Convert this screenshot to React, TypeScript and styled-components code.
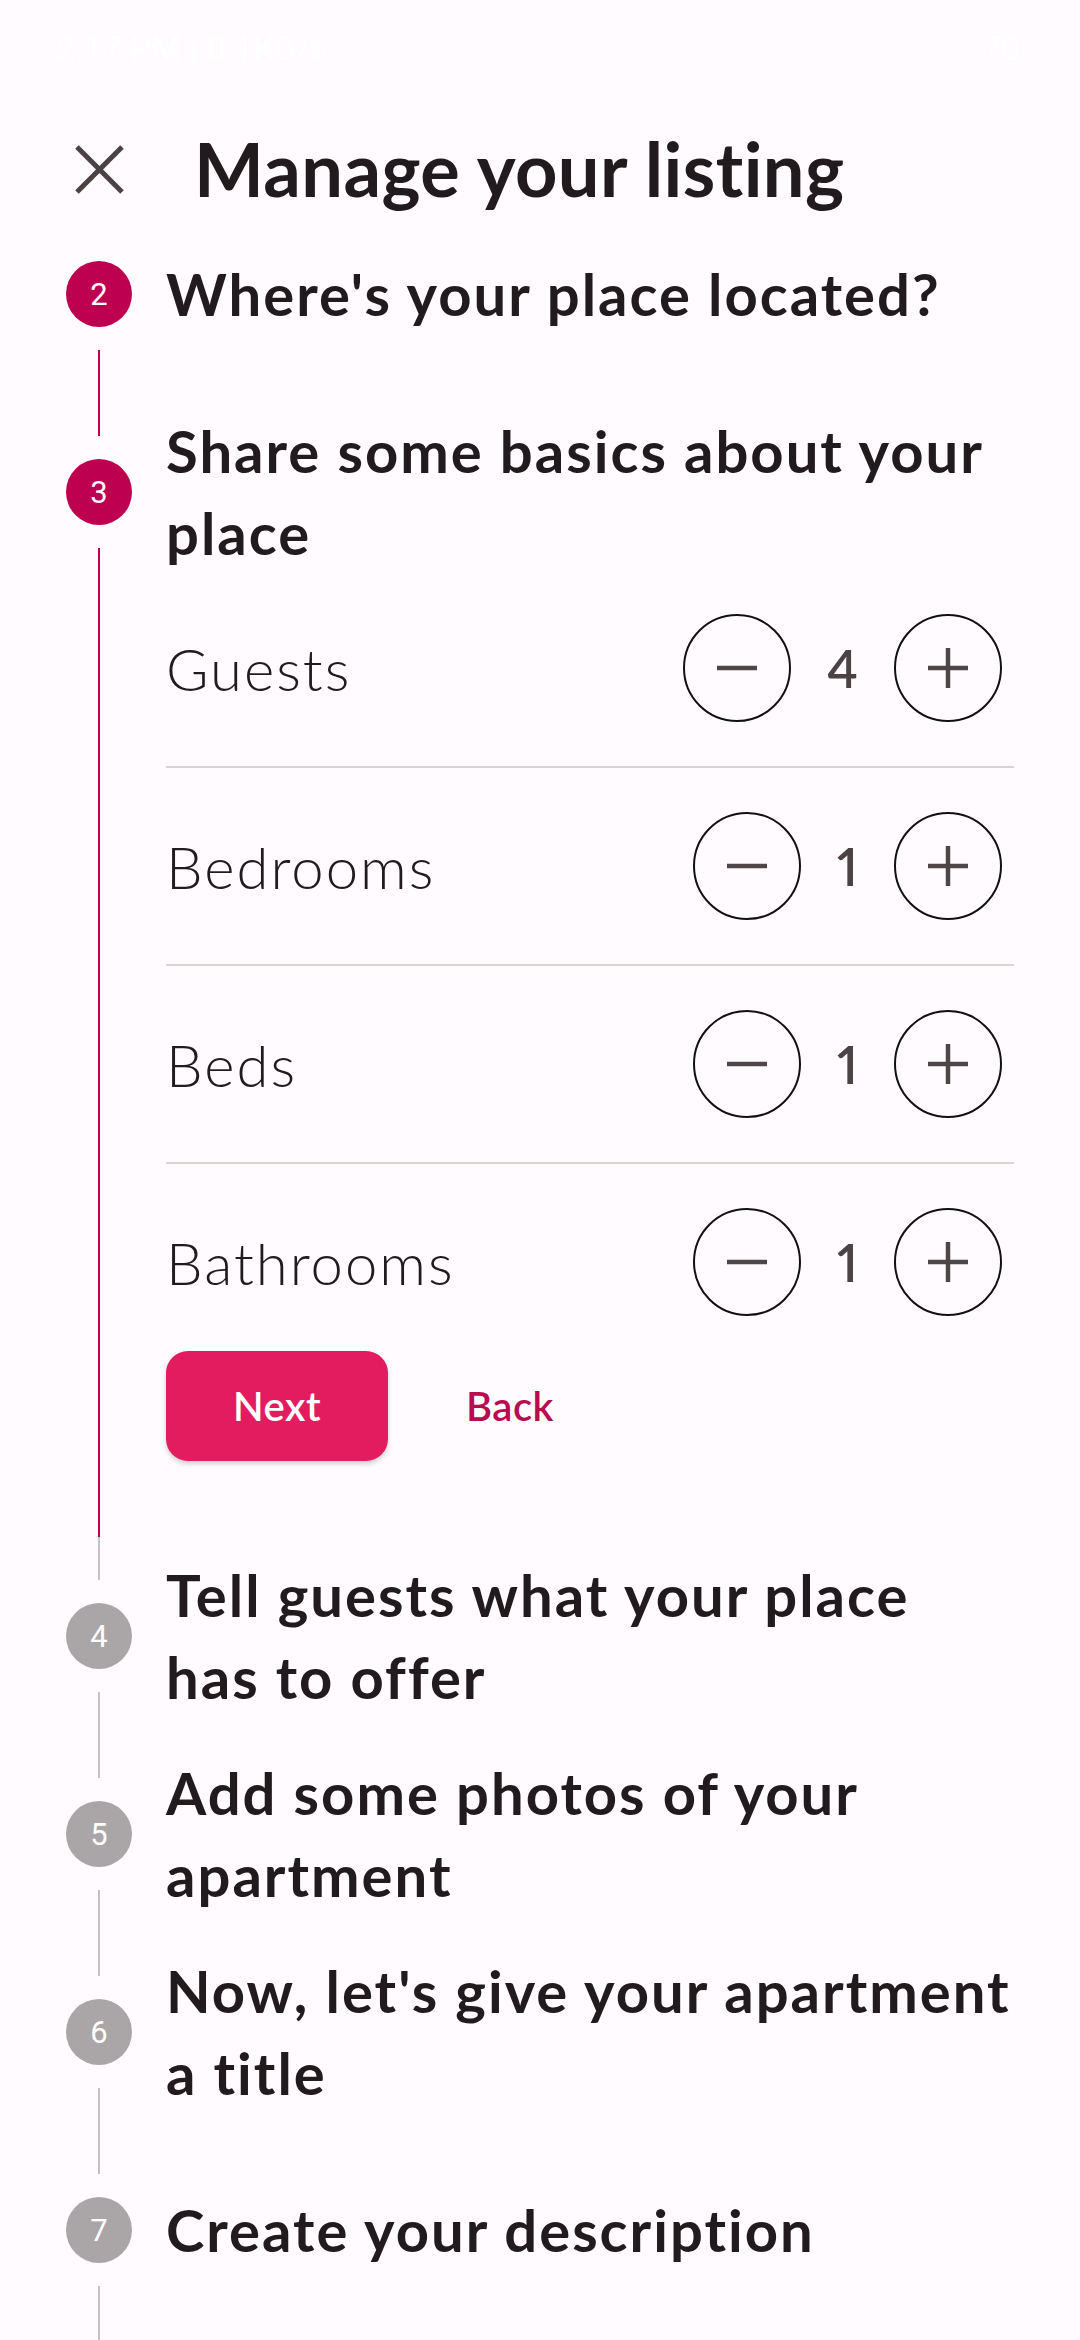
import React from "react";
import styled, { createGlobalStyle } from "styled-components";

const PINK = "#bd0050";
const GREY_LINE = "#c4c2c3";
const GREY_BADGE = "#aaa6a7";
const INK = "#211b1d";

const Global = createGlobalStyle`
  html, body { margin: 0; padding: 0; background: #fffbfe; }
  body { font-family: Lato, "Noto Sans", sans-serif; color: ${INK}; }
  * { box-sizing: border-box; }
`;

const Screen = styled.div`
  width: 1080px;
  height: 2340px;
  overflow: hidden;
  background: #fffbfe;
  display: flex;
  flex-direction: column;
`;

const StatusBar = styled.div`
  height: 96px;
  flex: none;
  display: flex;
  align-items: center;
  justify-content: space-between;
  padding: 0 60px 0 56px;
  color: #ffffff;
  font-family: Roboto, sans-serif;
  font-size: 34px;
`;

const StatusGroup = styled.div`
  display: flex;
  align-items: center;
  gap: 18px;
`;

const Toolbar = styled.div`
  height: 116px;
  flex: none;
  display: flex;
  align-items: flex-start;
  padding: 29px 0 0 75px;
  gap: 70px;
`;

const CloseButton = styled.button`
  width: 49px;
  height: 49px;
  margin-top: 20px;
  padding: 0;
  border: none;
  background: none;
  display: flex;
`;

const Title = styled.h1`
  margin: 0;
  font-size: 74px;
  line-height: 88px;
  font-weight: 700;
  color: ${INK};
  letter-spacing: 0.4px;
`;

const StepList = styled.div`
  display: flex;
  flex-direction: column;
`;

const StepGrid = styled.div`
  display: grid;
  grid-template-columns: 166px 1fr;
`;

const RailCell = styled.div<{ $h?: number }>`
  width: 66px;
  margin-left: 66px;
  display: flex;
  flex-direction: column;
  align-items: center;
  ${(p) => (p.$h !== undefined ? `height: ${p.$h}px;` : "")}
`;

const Segment = styled.div<{ $color: string; $gapTop?: number; $gapBottom?: number }>`
  flex: 1;
  width: 2px;
  background: ${(p) => p.$color};
  margin-top: ${(p) => p.$gapTop ?? 0}px;
  margin-bottom: ${(p) => p.$gapBottom ?? 0}px;
`;

const Badge = styled.div<{ $active: boolean }>`
  flex: none;
  width: 66px;
  height: 66px;
  border-radius: 50%;
  background: ${(p) => (p.$active ? PINK : GREY_BADGE)};
  color: #ffffff;
  display: flex;
  align-items: center;
  justify-content: center;
  font-family: Roboto, sans-serif;
  font-size: 31px;
  font-weight: 400;
`;

const StepTitle = styled.div`
  min-height: 164px;
  padding-right: 56px;
  display: flex;
  align-items: center;
  font-size: 58px;
  line-height: 82px;
  font-weight: 700;
  letter-spacing: 2px;
  color: ${INK};
`;

const StepBody = styled.div`
  padding: 0 66px 76px 0;
  display: flex;
  flex-direction: column;
`;

const CounterList = styled.div`
  display: flex;
  flex-direction: column;
  padding-bottom: 35px;
`;

const CounterRow = styled.div`
  display: flex;
  align-items: center;
  justify-content: space-between;
  padding: 44px 12px 44px 0;
  border-top: 2px solid #dcd2cf;
  &:first-child {
    border-top: none;
    padding-top: 40px;
  }
  &:last-child {
    padding-bottom: 0;
  }
`;

const CounterLabel = styled.span`
  font-size: 58px;
  font-weight: 300;
  color: ${INK};
  letter-spacing: 2px;
`;

const Counter = styled.div`
  display: flex;
  align-items: center;
  gap: 36px;
`;

const RoundButton = styled.button`
  width: 108px;
  height: 108px;
  border-radius: 50%;
  border: 2.5px solid #111111;
  background: transparent;
  padding: 0;
  display: flex;
  align-items: center;
  justify-content: center;
`;

const CounterValue = styled.span`
  font-size: 52px;
  font-weight: 600;
  color: #4b4244;
  font-variant-numeric: proportional-nums;
`;

const Actions = styled.div`
  display: flex;
  align-items: center;
  gap: 78px;
`;

const PrimaryButton = styled.button`
  width: 222px;
  height: 110px;
  border: none;
  border-radius: 22px;
  background: #e31c5f;
  color: #ffffff;
  font-family: Lato, sans-serif;
  font-size: 40px;
  font-weight: 600;
  letter-spacing: 0.5px;
  box-shadow: 0 3px 5px rgba(0, 0, 0, 0.18);
`;

const TextButton = styled.button`
  border: none;
  background: none;
  padding: 0;
  color: #b80b50;
  font-family: Lato, sans-serif;
  font-size: 40px;
  font-weight: 600;
  letter-spacing: 0.5px;
`;

const Icon = ({ plus }: { plus?: boolean }) => (
  <svg width="40" height="40" viewBox="0 0 40 40">
    <line x1="0" y1="20" x2="40" y2="20" stroke="#4e4547" strokeWidth="4.5" />
    {plus && <line x1="20" y1="0" x2="20" y2="40" stroke="#4e4547" strokeWidth="4.5" />}
  </svg>
);

type StepDef = {
  n: number;
  lines: string[];
  active: boolean;
  top: string;
  bottom: string;
  gapColor: string;
  gap: number;
  content?: React.ReactNode;
};

const counters = [
  { label: "Guests", value: 4 },
  { label: "Bedrooms", value: 1 },
  { label: "Beds", value: 1 },
  { label: "Bathrooms", value: 1 },
];

const Basics = () => (
  <>
    <CounterList>
      {counters.map((c) => (
        <CounterRow key={c.label}>
          <CounterLabel>{c.label}</CounterLabel>
          <Counter>
            <RoundButton aria-label="decrease">
              <Icon />
            </RoundButton>
            <CounterValue>{c.value}</CounterValue>
            <RoundButton aria-label="increase">
              <Icon plus />
            </RoundButton>
          </Counter>
        </CounterRow>
      ))}
    </CounterList>
    <Actions>
      <PrimaryButton>Next</PrimaryButton>
      <TextButton>Back</TextButton>
    </Actions>
  </>
);

const steps: StepDef[] = [
  { n: 2, lines: ["Where's your place located?"], active: true, top: "transparent", bottom: PINK, gapColor: PINK, gap: 34 },
  {
    n: 3,
    lines: ["Share some basics about your", "place"],
    active: true,
    top: PINK,
    bottom: PINK,
    gapColor: GREY_LINE,
    gap: 17,
    content: <Basics />,
  },
  { n: 4, lines: ["Tell guests what your place", "has to offer"], active: false, top: GREY_LINE, bottom: GREY_LINE, gapColor: GREY_LINE, gap: 34 },
  { n: 5, lines: ["Add some photos of your", "apartment"], active: false, top: GREY_LINE, bottom: GREY_LINE, gapColor: GREY_LINE, gap: 34 },
  { n: 6, lines: ["Now, let's give your apartment", "a title"], active: false, top: GREY_LINE, bottom: GREY_LINE, gapColor: GREY_LINE, gap: 34 },
  { n: 7, lines: ["Create your description"], active: false, top: GREY_LINE, bottom: GREY_LINE, gapColor: GREY_LINE, gap: 34 },
];

const Step = ({ s }: { s: StepDef }) => (
  <StepGrid>
    <RailCell>
      <Segment $color={s.top} $gapBottom={23} />
      <Badge $active={s.active}>{s.n}</Badge>
      <Segment $color={s.bottom} $gapTop={23} />
    </RailCell>
    <StepTitle>
      <span>
        {s.lines.map((l, i) => (
          <React.Fragment key={i}>
            {i > 0 && <br />}
            {l}
          </React.Fragment>
        ))}
      </span>
    </StepTitle>
    {s.content && (
      <>
        <RailCell>
          <Segment $color={s.bottom} />
        </RailCell>
        <StepBody>{s.content}</StepBody>
      </>
    )}
    <RailCell $h={s.gap}>
      <Segment $color={s.gapColor} />
    </RailCell>
    <div />
  </StepGrid>
);

export default function App() {
  return (
    <>
      <Global />
      <Screen>
        <StatusBar>
          <StatusGroup>
            <span>2:17 PM | 0.1KB/s</span>
          </StatusGroup>
          <StatusGroup>
            <span>70</span>
          </StatusGroup>
        </StatusBar>
        <Toolbar>
          <CloseButton aria-label="close">
            <svg width="49" height="49" viewBox="0 0 49 49">
              <path d="M2 2 L47 47 M47 2 L2 47" stroke="#4a4143" strokeWidth="5" fill="none" />
            </svg>
          </CloseButton>
          <Title>Manage your listing</Title>
        </Toolbar>
        <StepList>
          {steps.map((s) => (
            <Step key={s.n} s={s} />
          ))}
        </StepList>
      </Screen>
    </>
  );
}
